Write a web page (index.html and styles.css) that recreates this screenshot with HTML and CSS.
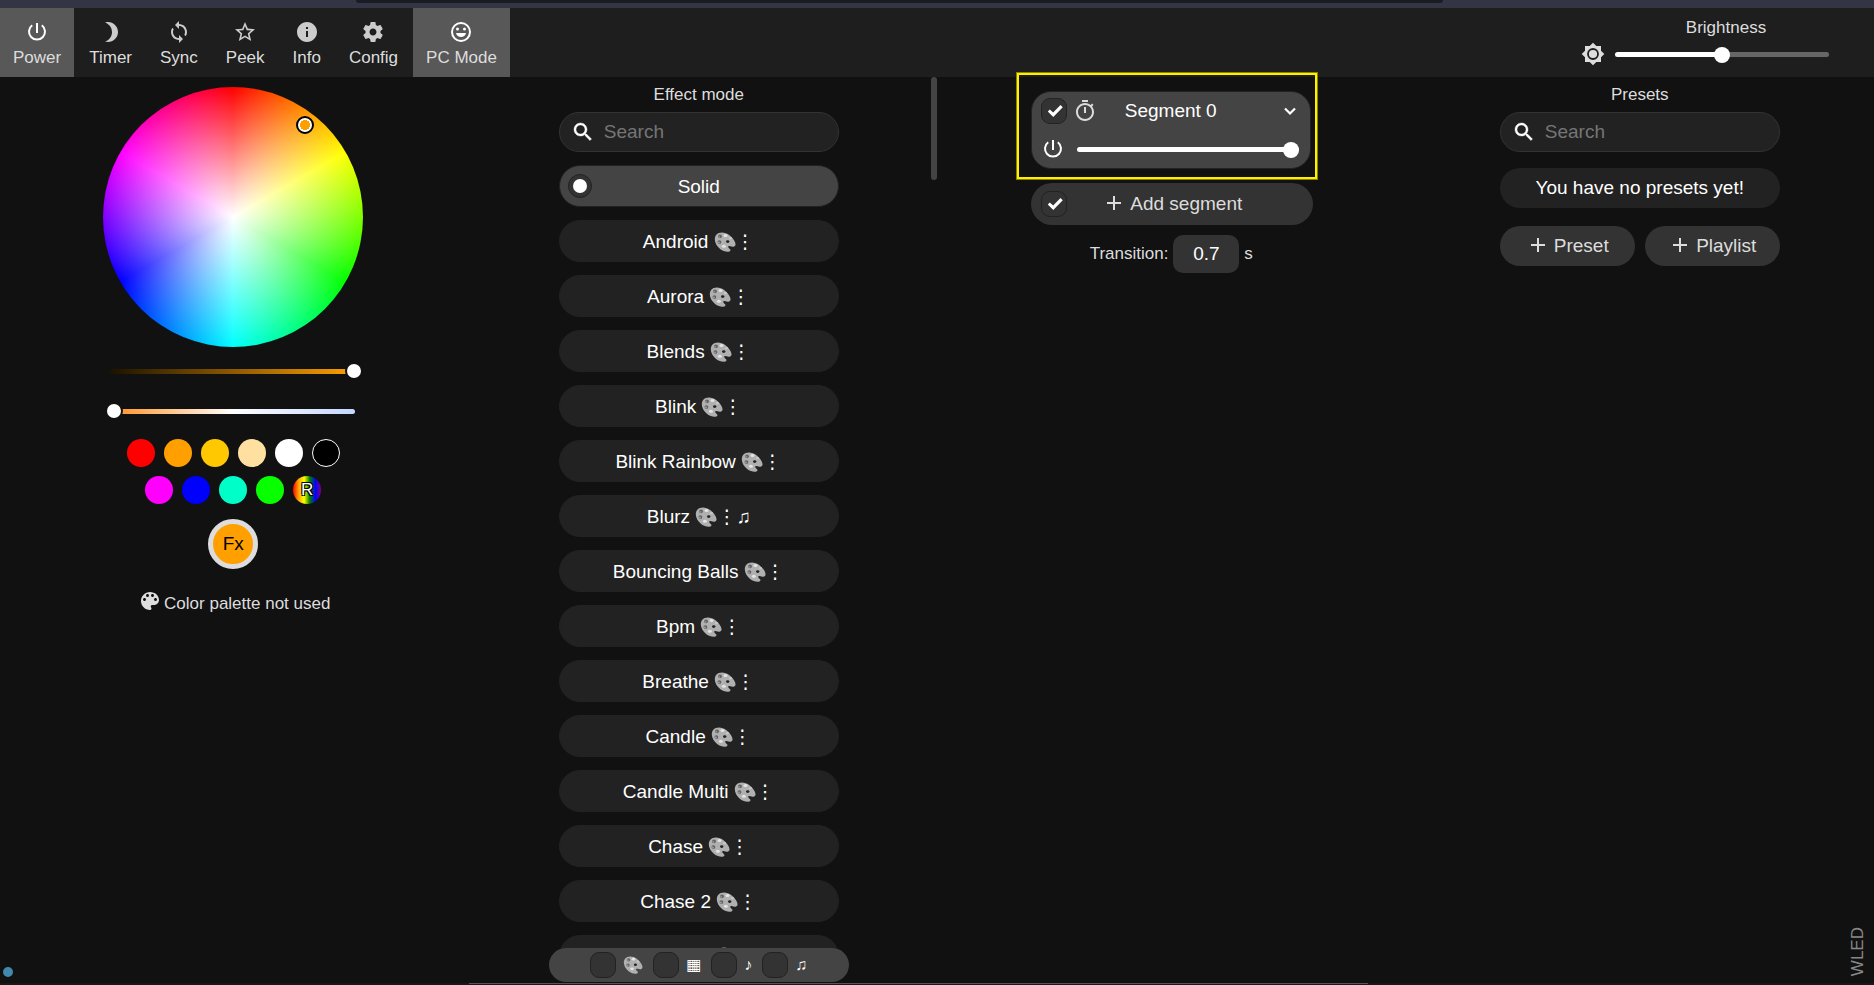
FILE: index.html
```html
<!DOCTYPE html>
<html lang="en">
<head>
<meta charset="utf-8">
<title>WLED</title>
<link rel="stylesheet" href="styles.css">
</head>
<body>
<svg class="sprite" aria-hidden="true">
  <symbol id="power" viewBox="0 0 24 24"><path d="M12 3v10M7.2 5.2a8 8 0 1 0 9.6 0" fill="none" stroke="currentColor" stroke-width="2"/></symbol>
  <symbol id="moon" viewBox="0 0 24 24"><path d="M9 2C7.950 2 6.950 2.160 6 2.460c4.060 1.270 7 5.060 7 9.540s-2.940 8.270-7 9.540c.950.300 1.950.460 3 .460 5.520 0 10-4.480 10-10S14.520 2 9 2z" fill="currentColor"/></symbol>
  <symbol id="sync" viewBox="0 0 24 24"><path d="M12 4V1L8 5l4 4V6c3.310 0 6 2.690 6 6 0 1.010-.25 1.970-.7 2.800l1.460 1.460C19.540 15.030 20 13.570 20 12c0-4.420-3.580-8-8-8zm0 14c-3.310 0-6-2.690-6-6 0-1.010.25-1.970.7-2.800L5.240 7.740C4.460 8.970 4 10.430 4 12c0 4.420 3.580 8 8 8v3l4-4-4-4v3z" fill="currentColor"/></symbol>
  <symbol id="star" viewBox="0 0 24 24"><path d="M22 9.240l-7.190-.62L12 2 9.190 8.630 2 9.240l5.460 4.730L5.820 21 12 17.270 18.180 21l-1.630-7.030L22 9.240zM12 15.400l-3.760 2.270 1-4.280-3.320-2.880 4.380-.38L12 6.100l1.710 4.040 4.380.38-3.320 2.880 1 4.280L12 15.400z" fill="currentColor"/></symbol>
  <symbol id="info" viewBox="0 0 24 24"><path d="M12 2C6.480 2 2 6.480 2 12s4.480 10 10 10 10-4.480 10-10S17.520 2 12 2zm1 15h-2v-6h2v6zm0-8h-2V7h2v2z" fill="currentColor"/></symbol>
  <symbol id="gear" viewBox="0 0 24 24"><path d="M19.430 12.980c.04-.32.07-.64.07-.98s-.03-.66-.07-.98l2.110-1.650c.19-.15.24-.42.12-.64l-2-3.460c-.12-.22-.39-.3-.61-.22l-2.490 1c-.52-.4-1.080-.73-1.690-.98l-.38-2.650C14.460 2.180 14.250 2 14 2h-4c-.25 0-.46.18-.49.42l-.38 2.650c-.61.25-1.170.59-1.690.98l-2.490-1c-.23-.09-.49 0-.61.22l-2 3.460c-.13.22-.07.49.12.64l2.110 1.650c-.04.32-.07.65-.07.98s.03.66.07.98l-2.110 1.650c-.19.15-.24.42-.12.64l2 3.460c.12.22.39.3.61.22l2.490-1c.52.4 1.080.73 1.690.98l.38 2.650c.03.24.24.42.49.42h4c.25 0 .46-.18.49-.42l.38-2.650c.61-.25 1.170-.59 1.690-.98l2.490 1c.23.09.49 0 .61-.22l2-3.460c.12-.22.07-.49-.12-.64l-2.110-1.650zM12 15.500c-1.930 0-3.500-1.570-3.500-3.500s1.570-3.500 3.500-3.500 3.500 1.570 3.500 3.500-1.570 3.500-3.500 3.500z" fill="currentColor"/></symbol>
  <symbol id="smile" viewBox="0 0 24 24"><circle cx="12" cy="12" r="9" fill="none" stroke="currentColor" stroke-width="2"/><circle cx="8.500" cy="9" r="1.500" fill="currentColor"/><circle cx="15.500" cy="9" r="1.500" fill="currentColor"/><path d="M7 13h10c-.5 2.600-2.500 4-5 4s-4.500-1.400-5-4z" fill="currentColor"/></symbol>
  <symbol id="sun" viewBox="0 0 24 24"><path d="M20 8.690V4h-4.690L12 .690 8.690 4H4v4.690L.690 12 4 15.310V20h4.690L12 23.310 15.310 20H20v-4.690L23.310 12 20 8.690z" fill="currentColor"/><circle cx="12" cy="12" r="5" fill="none" stroke="#1e1e1e" stroke-width="1.800"/></symbol>
  <symbol id="search" viewBox="0 0 24 24"><path d="M15.500 14h-.79l-.28-.27C15.410 12.590 16 11.110 16 9.500 16 5.910 13.090 3 9.500 3S3 5.910 3 9.500 5.910 16 9.500 16c1.610 0 3.090-.59 4.230-1.570l.27.28v.79l5 4.990L20.490 19l-4.990-5zm-6 0C7.010 14 5 11.990 5 9.500S7.010 5 9.500 5 14 7.010 14 9.500 11.990 14 9.500 14z" fill="currentColor" stroke="currentColor" stroke-width=".4"/></symbol>
  <symbol id="plus" viewBox="0 0 24 24"><path d="M12 5v14M5 12h14" fill="none" stroke="currentColor" stroke-width="2"/></symbol>
  <symbol id="timer" viewBox="0 0 24 24"><path d="M15 1H9v2h6V1zm-4 13h2V8h-2v6zm8.030-6.610l1.420-1.420c-.43-.51-.9-.99-1.410-1.410l-1.420 1.420C16.070 4.740 14.120 4 12 4c-4.970 0-9 4.030-9 9s4.020 9 9 9 9-4.030 9-9c0-2.120-.74-4.070-1.970-5.610zM12 20c-3.870 0-7-3.130-7-7s3.130-7 7-7 7 3.130 7 7-3.130 7-7 7z" fill="currentColor"/></symbol>
  <symbol id="chevron" viewBox="0 0 24 24"><path d="M7 9.500l5 5 5-5" fill="none" stroke="currentColor" stroke-width="2.200"/></symbol>
  <symbol id="palette" viewBox="0 0 24 24"><path d="M12 3c-4.970 0-9 4.030-9 9s4.030 9 9 9c.83 0 1.500-.67 1.500-1.500 0-.39-.15-.74-.39-1.010-.23-.26-.38-.61-.38-.99 0-.83.67-1.500 1.500-1.500H16c2.760 0 5-2.240 5-5 0-4.420-4.030-8-9-8zm-5.500 9c-.83 0-1.500-.67-1.500-1.500S5.670 9 6.500 9 8 9.670 8 10.500 7.330 12 6.500 12zm3-4C8.670 8 8 7.330 8 6.500S8.670 5 9.500 5s1.500.67 1.500 1.500S10.330 8 9.500 8zm5 0c-.83 0-1.500-.67-1.500-1.500S13.670 5 14.500 5s1.500.67 1.500 1.500S15.330 8 14.500 8zm3 4c-.83 0-1.500-.67-1.500-1.500S16.670 9 17.500 9s1.500.67 1.500 1.500-.67 1.500-1.500 1.500z" fill="currentColor"/></symbol>
  <symbol id="paint" viewBox="0 0 22 20">
    <path d="M2.300 2.800C5-.4 11-.3 15.500 3.200c4 3.200 6.400 7.200 6 9.500-.4 2.400-3.200 2.300-5.200 1.600-1.900-.6-2.700.1-1.700 1.500.8 1.200 2.400 1.500 1.700 2.900-.9 1.700-6.300 1.500-10.200-1.700C1.300 13.200-.9 6.800 2.300 2.800z" fill="#b0b0b0"/>
    <ellipse cx="13.700" cy="9.600" rx="1.700" ry="1.400" fill="#222"/>
    <circle cx="6" cy="4.300" r="1.900" fill="#606060"/><circle cx="5.300" cy="4.800" r="1.100" fill="#8c8c8c"/>
    <circle cx="5.400" cy="10.100" r="1.900" fill="#606060"/><circle cx="4.900" cy="10.600" r="1.100" fill="#999"/>
    <ellipse cx="11.500" cy="3.500" rx="2" ry="1.500" fill="#e4e4e4"/>
    <ellipse cx="16.400" cy="6.100" rx="1.600" ry="1.200" fill="#c8c8c8"/>
    <ellipse cx="9.900" cy="14.300" rx="2" ry="1.500" fill="#e4e4e4"/>
  </symbol>
</svg>

<div class="window-strip"><div class="window-tab"></div></div>

<header class="topbar">
  <nav class="tools">
    <button class="tool active"><svg class="icon"><use href="#power"/></svg><span>Power</span></button>
    <button class="tool"><svg class="icon"><use href="#moon"/></svg><span>Timer</span></button>
    <button class="tool"><svg class="icon"><use href="#sync"/></svg><span>Sync</span></button>
    <button class="tool"><svg class="icon"><use href="#star"/></svg><span>Peek</span></button>
    <button class="tool"><svg class="icon"><use href="#info"/></svg><span>Info</span></button>
    <button class="tool"><svg class="icon"><use href="#gear"/></svg><span>Config</span></button>
    <button class="tool active"><svg class="icon"><use href="#smile"/></svg><span>PC Mode</span></button>
  </nav>
  <div class="brightness">
    <label for="bri">Brightness</label>
    <div class="brightness-row">
      <svg class="icon"><use href="#sun"/></svg>
      <input class="slider" id="bri" type="range" min="0" max="100" value="50" style="--fill:50%">
    </div>
  </div>
</header>

<main class="columns">
  <section class="column colors" aria-label="Colors">
    <div class="wheel"><span class="wheel-handle"></span></div>
    <div class="ramp ramp-value"><input type="range" min="0" max="100" value="100" aria-label="Value"></div>
    <div class="ramp ramp-kelvin"><input type="range" min="0" max="100" value="0" aria-label="Color temperature"></div>
    <div class="swatches">
      <button class="swatch red" aria-label="Red"></button>
      <button class="swatch orange" aria-label="Orange"></button>
      <button class="swatch amber" aria-label="Amber"></button>
      <button class="swatch warm" aria-label="Warm white"></button>
      <button class="swatch white" aria-label="White"></button>
      <button class="swatch black" aria-label="Black"></button>
    </div>
    <div class="swatches">
      <button class="swatch magenta" aria-label="Magenta"></button>
      <button class="swatch blue" aria-label="Blue"></button>
      <button class="swatch mint" aria-label="Mint"></button>
      <button class="swatch green" aria-label="Green"></button>
      <button class="swatch random">R</button>
    </div>
    <button class="slot">Fx</button>
    <p class="palette-note"><svg class="icon"><use href="#palette"/></svg><span>Color palette not used</span></p>
  </section>

  <section class="column effects">
    <div class="scroll-thumb"></div>
    <h2>Effect mode</h2>
    <div class="search"><svg class="icon"><use href="#search"/></svg><input type="text" placeholder="Search" aria-label="Search effects"></div>
    <div class="effect-list">
      <label class="effect selected"><input type="radio" name="fx" checked><span>Solid</span></label>
      <label class="effect"><input type="radio" name="fx"><span>Android <svg class="paint"><use href="#paint"/></svg>⋮</span></label>
      <label class="effect"><input type="radio" name="fx"><span>Aurora <svg class="paint"><use href="#paint"/></svg>⋮</span></label>
      <label class="effect"><input type="radio" name="fx"><span>Blends <svg class="paint"><use href="#paint"/></svg>⋮</span></label>
      <label class="effect"><input type="radio" name="fx"><span>Blink <svg class="paint"><use href="#paint"/></svg>⋮</span></label>
      <label class="effect"><input type="radio" name="fx"><span>Blink Rainbow <svg class="paint"><use href="#paint"/></svg>⋮</span></label>
      <label class="effect"><input type="radio" name="fx"><span>Blurz <svg class="paint"><use href="#paint"/></svg>⋮♫</span></label>
      <label class="effect"><input type="radio" name="fx"><span>Bouncing Balls <svg class="paint"><use href="#paint"/></svg>⋮</span></label>
      <label class="effect"><input type="radio" name="fx"><span>Bpm <svg class="paint"><use href="#paint"/></svg>⋮</span></label>
      <label class="effect"><input type="radio" name="fx"><span>Breathe <svg class="paint"><use href="#paint"/></svg>⋮</span></label>
      <label class="effect"><input type="radio" name="fx"><span>Candle <svg class="paint"><use href="#paint"/></svg>⋮</span></label>
      <label class="effect"><input type="radio" name="fx"><span>Candle Multi <svg class="paint"><use href="#paint"/></svg>⋮</span></label>
      <label class="effect"><input type="radio" name="fx"><span>Chase <svg class="paint"><use href="#paint"/></svg>⋮</span></label>
      <label class="effect"><input type="radio" name="fx"><span>Chase 2 <svg class="paint"><use href="#paint"/></svg>⋮</span></label>
      <label class="effect"><input type="radio" name="fx"><span>Chase 3 <svg class="paint"><use href="#paint"/></svg>⋮</span></label>
    </div>
    <div class="filters">
      <label><input class="check" type="checkbox"><svg class="paint"><use href="#paint"/></svg></label>
      <label><input class="check" type="checkbox"><span>▦</span></label>
      <label><input class="check" type="checkbox"><span>♪</span></label>
      <label><input class="check" type="checkbox"><span>♫</span></label>
    </div>
  </section>

  <section class="column segments" aria-label="Segments">
    <div class="segment">
      <div class="segment-head">
        <input class="check" type="checkbox" checked aria-label="Select segment 0">
        <svg class="icon"><use href="#timer"/></svg>
        <span class="segment-name">Segment 0</span>
        <button class="plain" aria-label="Expand"><svg class="icon"><use href="#chevron"/></svg></button>
      </div>
      <div class="segment-level">
        <button class="plain" aria-label="Segment power"><svg class="icon"><use href="#power"/></svg></button>
        <input class="slider" type="range" min="0" max="100" value="100" style="--fill:100%" aria-label="Segment brightness">
      </div>
      <div class="highlight"></div>
    </div>
    <div class="add-segment">
      <input class="check" type="checkbox" checked aria-label="Select all segments">
      <button class="plain"><svg class="icon plus"><use href="#plus"/></svg>Add segment</button>
    </div>
    <div class="transition">
      <label for="tt">Transition:</label>
      <input id="tt" type="text" value="0.7">
      <span>s</span>
    </div>
  </section>

  <section class="column presets">
    <h2>Presets</h2>
    <div class="search"><svg class="icon"><use href="#search"/></svg><input type="text" placeholder="Search" aria-label="Search presets"></div>
    <p class="empty">You have no presets yet!</p>
    <div class="preset-actions">
      <button class="pill"><svg class="icon plus"><use href="#plus"/></svg>Preset</button>
      <button class="pill"><svg class="icon plus"><use href="#plus"/></svg>Playlist</button>
    </div>
  </section>
</main>

<span class="status-dot"></span>
<span class="brand">WLED</span>
<div class="bottom-edge"></div>
</body>
</html>
```

FILE: styles.css
```css
* { box-sizing: border-box; }

body {
  margin: 0;
  height: 100vh;
  display: flex;
  flex-direction: column;
  overflow: hidden;
  position: relative;
  background: #111;
  color: #ddd;
  font: 17px/20px "Liberation Sans", "DejaVu Sans", sans-serif;
}

button, input { font: inherit; color: inherit; }
button { border: 0; padding: 0; cursor: pointer; }
input { margin: 0; }
h2, p { margin: 0; font-size: 17px; font-weight: normal; }

.sprite { position: absolute; width: 0; height: 0; }
.icon { width: 24px; height: 24px; flex: none; display: block; }
.plain { background: none; display: flex; align-items: center; }

/* Window frame */
.window-strip { height: 8px; flex: none; background: #333545; }
.window-tab { height: 3px; margin: 0 23% 0 19%; background: #1a1c24; border-radius: 0 0 4px 4px; }
.bottom-edge { position: absolute; bottom: 0; left: 0; right: 0; height: 2px; background: #1a161a; }
.bottom-edge::before { content: ""; display: block; height: 1px; margin: 0 27% 0 25%; background: #555; }

/* Top bar */
.topbar { flex: none; display: flex; justify-content: space-between; background: #1e1e1e; }
.tools { display: flex; gap: 2px; }
.tool {
  display: flex;
  flex-direction: column;
  align-items: center;
  gap: 4px;
  padding: 12px 13px 9px;
  background: none;
}
.tool .icon { color: #ccc; }
.tool.active { background: #585858; }
.tool.active .icon { color: #fff; }

.brightness { display: flex; flex-direction: column; gap: 6px; padding: 10px 45px 0 0; }
.brightness label { text-align: center; padding-left: 42px; }
.brightness-row { display: flex; align-items: center; gap: 10px; height: 20px; }
.brightness-row .slider { width: 214px; }

/* Sliders */
.slider {
  appearance: none;
  height: 16px;
  background: none;
}
.slider::-webkit-slider-runnable-track {
  height: 5px;
  border-radius: 3px;
  background: linear-gradient(90deg, #fff var(--fill), #666 var(--fill));
}
.slider::-webkit-slider-thumb {
  appearance: none;
  width: 16px;
  height: 16px;
  margin-top: -5px;
  border-radius: 50%;
  background: #fff;
}

/* Tick boxes */
.check {
  appearance: none;
  display: grid;
  place-items: center;
  flex: none;
  width: 26px;
  height: 26px;
  border: 1px solid #222;
  border-radius: 9px;
  background: #333;
}
.check:checked { padding-left: 2px; }
.check:checked::before {
  content: "";
  width: 15px;
  height: 12px;
  background: #fff;
  clip-path: polygon(0 54%, 14% 37%, 36% 62%, 85% 0, 100% 18%, 37% 100%);
}

/* Columns */
.columns { flex: 1; min-height: 0; display: grid; grid-template-columns: repeat(4, 1fr); }
.column { position: relative; min-width: 0; min-height: 0; overflow: hidden; display: flex; flex-direction: column; align-items: center; }
.column h2 { padding-top: 8px; margin-bottom: 7px; }

/* Colors */
.colors { padding: 10px 2px 0 0; }
.wheel {
  position: relative;
  width: 260px;
  height: 260px;
  margin-bottom: 12px;
  border-radius: 50%;
  background:
    radial-gradient(closest-side, #fff, rgba(255, 255, 255, 0)),
    conic-gradient(#f00, #ff0, #0f0, #0ff, #00f, #f0f, #f00);
}
.wheel-handle {
  position: absolute;
  left: 74%;
  top: 11%;
  width: 18px;
  height: 18px;
  border: 2px solid #000;
  border-radius: 50%;
  background: radial-gradient(circle, #ffa000 5px, #fff 5px);
}
.ramp { display: grid; align-items: center; width: 258px; height: 24px; margin: 0 0 16px 2px; }
.ramp::before { content: ""; grid-area: 1 / 1; height: 5px; margin: 0 8px 0 5px; border-radius: 3px; }
.ramp-value::before { background: linear-gradient(90deg, #1c1200, #ffa000); }
.ramp-kelvin::before { background: linear-gradient(90deg, #ff8f1f, #fff 50%, #c4d6ff); }
.ramp input { appearance: none; grid-area: 1 / 1; width: 100%; height: 18px; background: none; }
.ramp input::-webkit-slider-thumb {
  appearance: none;
  width: 18px;
  height: 18px;
  border: 2px solid #111;
  border-radius: 50%;
  background: #fff;
}
.swatches { display: flex; gap: 9px; margin-bottom: 9px; }
.swatch { width: 28px; height: 28px; border-radius: 50%; }
.red { background: #f00; }
.orange { background: #ffa000; }
.amber { background: #ffc800; }
.warm { background: #ffe0a0; }
.white { background: #fff; }
.black { background: #000; border: 1px solid #fff; }
.magenta { background: #f0f; }
.blue { background: #00f; }
.mint { background: #00ffc8; }
.green { background: #08ff00; }
.random {
  color: #fff;
  background: linear-gradient(90deg, red, orange, yellow, green, blue, purple);
  text-shadow: -1px -1px 0 #000, 1px -1px 0 #000, -1px 1px 0 #000, 1px 1px 0 #000;
}
.slot {
  width: 50px;
  height: 50px;
  margin-top: 6px;
  border: 5px solid #ddd;
  border-radius: 50%;
  background: #ffa000;
  color: #000;
  font-size: 19px;
}
.palette-note { display: flex; align-items: flex-end; gap: 2px; margin: 20px 0 0 2px; }
.palette-note .icon { margin-bottom: 1px; }

/* Search box */
.search {
  display: flex;
  align-items: center;
  flex: none;
  gap: 9px;
  width: 280px;
  height: 40px;
  padding: 0 11px;
  border: 1px solid #333;
  border-radius: 20px;
  background: #222;
}
.search .icon { color: #fff; }
.search input { flex: 1; min-width: 0; border: 0; padding: 0; background: none; font-size: 19px; outline: 0; }
.search input::placeholder { color: #757575; }

/* Effects */
.effects { padding: 0 8px 3px 0; }
.scroll-thumb { position: absolute; top: 0; right: 0; width: 6px; height: 103px; border-radius: 3px; background: #444; }
.effect-list {
  display: flex;
  flex: 1;
  flex-direction: column;
  gap: 13px;
  width: 280px;
  min-height: 0;
  margin-top: 13px;
  overflow: hidden;
}
.effect {
  display: grid;
  grid-template-columns: 24px 1fr 24px;
  align-items: center;
  flex: none;
  height: 42px;
  padding: 0 8px;
  border: 1px solid #222;
  border-radius: 21px;
  background: #222;
  color: #fff;
  font-size: 19px;
}
.effect span { grid-column: 2; padding-top: 2px; text-align: center; white-space: nowrap; }
.effect input { appearance: none; display: none; }
.effect.selected { background: #444; }
.effect.selected input {
  display: grid;
  place-items: center;
  width: 24px;
  height: 24px;
  border: 1px solid #222;
  border-radius: 50%;
  background: #333;
}
.effect.selected input::before { content: ""; width: 14px; height: 14px; border-radius: 50%; background: #fff; }
.paint { width: 22px; height: 20px; vertical-align: -4px; }
.filters {
  display: flex;
  flex: none;
  justify-content: center;
  gap: 10px;
  width: 300px;
  padding: 4px 0;
  border-radius: 17px;
  background: #444;
  color: #fff;
  font-size: 16px;
}
.filters label { display: flex; align-items: center; gap: 7px; }
.filters .paint { width: 20px; height: 18px; }

/* Segments */
.segments { overflow: visible; padding-top: 14px; }
.segment {
  position: relative;
  width: 280px;
  height: 78px;
  padding: 6px 8px 0 9px;
  border: 1px solid #222;
  border-radius: 20px;
  background: #444;
  color: #fff;
}
.segment-head { display: grid; grid-template-columns: 26px 24px 1fr 58px; align-items: center; gap: 6px; font-size: 19px; }
.segment-head > .icon { color: #ddd; }
.segment-name { text-align: center; }
.segment-head .plain { justify-content: flex-end; }
.segment-level { display: flex; align-items: center; gap: 12px; margin-top: 13px; }
.segment-level .slider { width: 222px; }
.highlight {
  position: absolute;
  inset: -19px -7px -11px -15px;
  border: 2px solid #fff000;
  outline: 1px solid #8a8400;
  pointer-events: none;
}
.add-segment {
  display: grid;
  grid-template-columns: 26px 1fr 26px;
  align-items: center;
  width: 282px;
  height: 42px;
  margin: 14px 0 0 2px;
  padding: 0 10px;
  border-radius: 21px;
  background: #333;
  font-size: 19px;
}
.add-segment .plain { justify-content: center; }
.plus { margin: 0 4px 2px 0; }
.transition { display: flex; align-items: center; gap: 5px; margin-top: 10px; }
.transition input {
  width: 66px;
  height: 38px;
  border: 0;
  border-radius: 10px;
  background: #333;
  color: #fff;
  font-size: 19px;
  text-align: center;
}

/* Presets */
.empty {
  width: 280px;
  padding: 10px;
  margin-top: 16px;
  border-radius: 20px;
  background: #222;
  color: #fff;
  font-size: 19px;
  text-align: center;
}
.preset-actions { display: grid; grid-template-columns: 1fr 1fr; gap: 10px; width: 280px; margin-top: 18px; }
.pill {
  display: flex;
  align-items: center;
  justify-content: center;
  height: 40px;
  border-radius: 20px;
  background: #333;
  font-size: 19px;
}

/* Page corners */
.status-dot { position: absolute; left: 3px; bottom: 8px; width: 10px; height: 10px; border-radius: 50%; background: #4288ae; }
.brand { position: absolute; right: 6px; bottom: 9px; writing-mode: vertical-rl; rotate: 180deg; color: #888; }
```
